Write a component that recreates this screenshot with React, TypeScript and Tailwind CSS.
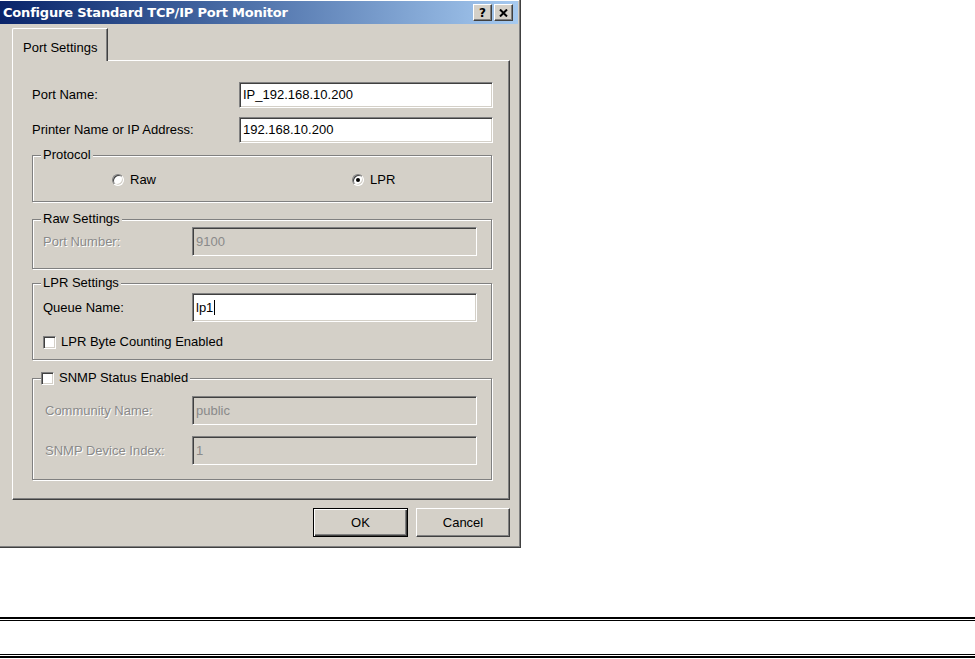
import { type ReactNode } from 'react';

const sunken =
  'border border-t-[#808080] border-l-[#808080] border-b-white border-r-white shadow-[inset_1px_1px_0_#404040,inset_-1px_-1px_0_#d4d0c8]';
const raised =
  'border border-t-white border-l-white border-b-[#404040] border-r-[#404040] shadow-[inset_-1px_-1px_0_#808080]';
const dim = 'text-[#8a8a8a] [text-shadow:1px_1px_0_#fff]';

function TextBox({ value, width, height, disabled, caret }: {
  value: string; width: string; height: string; disabled?: boolean; caret?: boolean;
}) {
  return (
    <div className={`${sunken} ${width} ${height} flex items-center pl-[3px] ${disabled ? 'bg-[#d4d0c8] text-[#8a8a8a]' : 'bg-white'}`}>
      <span>{value}</span>
      {caret && <span className="w-px h-[15px] bg-black ml-px" />}
    </div>
  );
}

function Radio({ checked }: { checked?: boolean }) {
  return (
    <span className={`${sunken} w-[12px] h-[12px] rounded-full bg-white flex items-center justify-center`}>
      {checked && <span className="w-[4px] h-[4px] rounded-full bg-black" />}
    </span>
  );
}

function Check() {
  return <span className={`${sunken} block w-[13px] h-[13px] bg-white`} />;
}

function Group({ label, className, children }: { label: ReactNode; className: string; children: ReactNode }) {
  return (
    <div className={`relative w-[460px] border border-[#808080] shadow-[inset_1px_1px_0_#fff,1px_1px_0_#fff] ${className}`}>
      <div className="absolute left-[8px] -top-[8px] px-[2px] bg-[#d4d0c8] leading-[14px] flex items-center">
        {label}
      </div>
      {children}
    </div>
  );
}

function TitleBar() {
  return (
    <div className="h-[23px] flex items-center justify-between pl-[3px] pr-[5px] bg-linear-to-r from-[#0a246a] to-[#a6caf0]">
      <span className="text-white font-bold text-[13px] font-['DejaVu_Sans',sans-serif] tracking-[-0.2px]">
        Configure Standard TCP/IP Port Monitor
      </span>
      <div className="flex gap-[2px]">
        <div className={`${raised} w-[19px] h-[17px] bg-[#d4d0c8] flex items-center justify-center text-[12px] font-bold font-['DejaVu_Sans',sans-serif] leading-none`}>
          ?
        </div>
        <div className={`${raised} w-[19px] h-[17px] bg-[#d4d0c8] flex items-center justify-center`}>
          <svg width="9" height="8" viewBox="0 0 9 8">
            <path d="M1 0.5 L8 7.5 M8 0.5 L1 7.5" stroke="#000" strokeWidth="2" />
          </svg>
        </div>
      </div>
    </div>
  );
}

export default function App() {
  return (
    <div className="w-[975px] h-[659px] bg-white overflow-hidden font-['Liberation_Sans',Arial,sans-serif] text-[13px] text-black">
      <div className="w-[521px] h-[548px] bg-[#d4d0c8] pt-px pr-[3px] pb-[3px] shadow-[inset_-1px_-1px_0_#404040,inset_-2px_-2px_0_#808080,inset_0_1px_0_#fff]">
        <TitleBar />

        <div className="pl-[12px] pr-[8px] pt-[4px]">
          {/* tab strip */}
          <div className="flex">
            <div className="relative z-10 -mb-px w-[96px] h-[33px] bg-[#d4d0c8] border-l border-t border-white border-r border-r-[#404040] shadow-[inset_-1px_0_0_#808080] rounded-tl-[2px] pl-[10px] pt-[12px] leading-[14px]">
              Port Settings
            </div>
          </div>

          {/* tab panel */}
          <div className="h-[440px] border border-t-white border-l-white border-b-[#404040] border-r-[#404040] shadow-[inset_-1px_-1px_0_#808080] pt-[21px] pl-[19px]">
            <div className="flex items-center h-[26px]">
              <span className="w-[207px]">Port Name:</span>
              <TextBox value="IP_192.168.10.200" width="w-[254px]" height="h-[26px]" />
            </div>
            <div className="flex items-center h-[26px] mt-[9px]">
              <span className="w-[207px]">Printer Name or IP Address:</span>
              <TextBox value="192.168.10.200" width="w-[254px]" height="h-[26px]" />
            </div>

            <Group label="Protocol" className="mt-[12px] h-[47px]">
              <div className="flex items-center pt-[17px] pl-[79px]">
                <div className="w-[240px] flex items-center gap-[6px]">
                  <Radio />
                  <span className="leading-[14px]">Raw</span>
                </div>
                <div className="flex items-center gap-[6px]">
                  <Radio checked />
                  <span className="leading-[14px]">LPR</span>
                </div>
              </div>
            </Group>

            <Group label="Raw Settings" className="mt-[17px] h-[50px]">
              <div className="flex items-center pt-[7px] pl-[10px]">
                <span className={`w-[149px] ${dim}`}>Port Number:</span>
                <TextBox value="9100" width="w-[285px]" height="h-[29px]" disabled />
              </div>
            </Group>

            <Group label="LPR Settings" className="mt-[14px] h-[77px]">
              <div className="flex items-center pt-[9px] pl-[10px]">
                <span className="w-[149px]">Queue Name:</span>
                <TextBox value="lp1" width="w-[285px]" height="h-[29px]" caret />
              </div>
              <div className="flex items-center gap-[5px] mt-[13px] pl-[10px]">
                <Check />
                <span className="leading-[14px]">LPR Byte Counting Enabled</span>
              </div>
            </Group>

            <Group
              label={
                <span className="flex items-center gap-[5px] -ml-[2px]">
                  <Check />
                  <span>SNMP Status Enabled</span>
                </span>
              }
              className="mt-[18px] h-[102px]"
            >
              <div className="flex items-center pt-[17px] pl-[12px]">
                <span className={`w-[147px] ${dim}`}>Community Name:</span>
                <TextBox value="public" width="w-[285px]" height="h-[29px]" disabled />
              </div>
              <div className="flex items-center mt-[11px] pl-[12px]">
                <span className={`w-[147px] ${dim}`}>SNMP Device Index:</span>
                <TextBox value="1" width="w-[285px]" height="h-[29px]" disabled />
              </div>
            </Group>
          </div>

          {/* dialog buttons */}
          <div className="flex justify-end gap-[8px] mt-[8px]">
            <button className="w-[95px] h-[29px] bg-[#d4d0c8] border border-black shadow-[inset_1px_1px_0_#fff,inset_-1px_-1px_0_#404040,inset_-2px_-2px_0_#808080]">
              OK
            </button>
            <button className={`${raised} w-[94px] h-[29px] bg-[#d4d0c8]`}>Cancel</button>
          </div>
        </div>
      </div>

      {/* document rules below the figure */}
      <div className="mt-[69px]">
        <div className="h-[2px] bg-black" />
        <div className="h-px bg-black mt-px" />
        <div className="h-px bg-black mt-[33px]" />
        <div className="h-[2px] bg-black mt-px" />
      </div>
    </div>
  );
}
